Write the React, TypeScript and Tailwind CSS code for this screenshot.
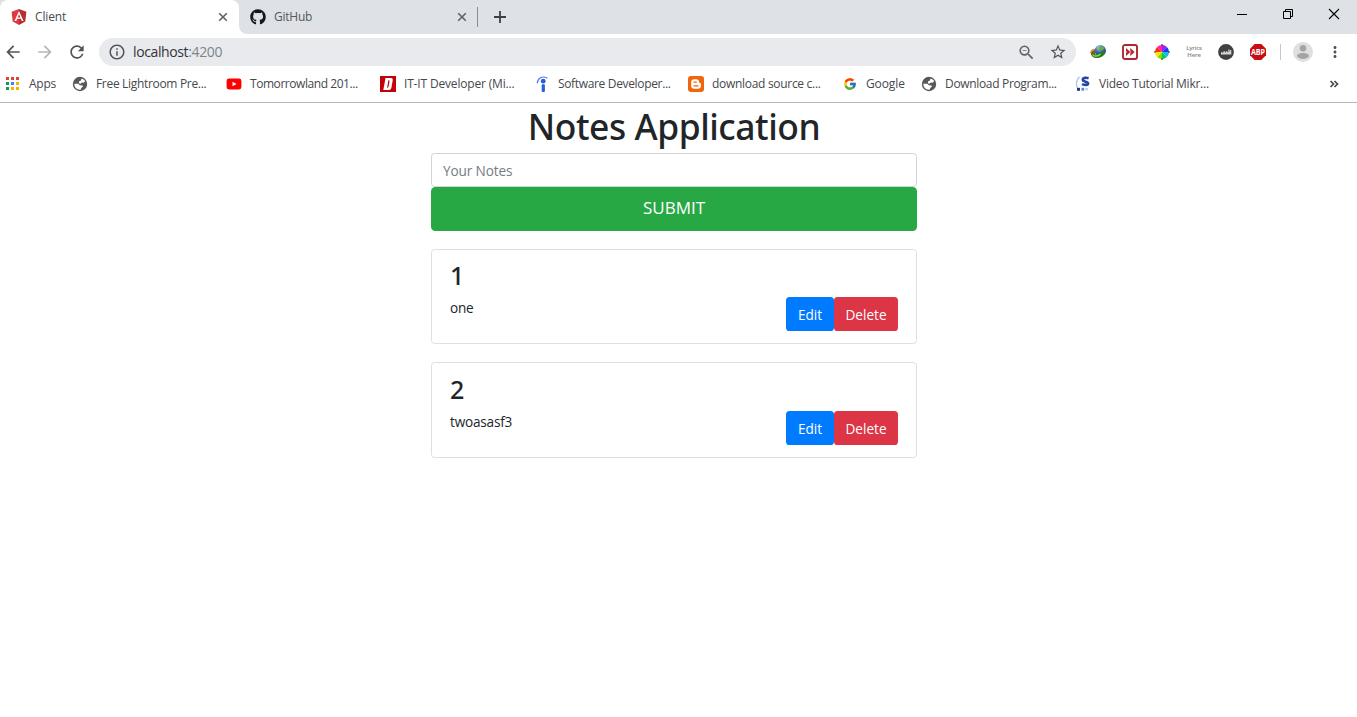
import type { ReactNode } from 'react';
import { FaGithub } from 'react-icons/fa';
import { FcGoogle } from 'react-icons/fc';
import {
  MdArrowBack,
  MdArrowForward,
  MdInfoOutline,
  MdMoreVert,
  MdRefresh,
  MdStarBorder,
  MdZoomOut,
} from 'react-icons/md';

function AngularIcon() {
  return (
    <svg viewBox="0 0 16 16" className="h-4 w-4 shrink-0">
      <path d="M8 0 .6 2.7l1.1 9.8L8 16z" fill="#dd3a44" />
      <path d="M8 0l7.4 2.7-1.1 9.8L8 16z" fill="#b52e31" />
      <path
        d="M8 2 3.5 12.1h1.7l.9-2.3h3.8l.9 2.3h1.7zm0 3.1 1.3 3.3H6.7z"
        fill="#fff"
        fillRule="evenodd"
      />
    </svg>
  );
}

function CloseIcon() {
  return (
    <svg viewBox="0 0 10 10" className="h-[10px] w-[10px] shrink-0">
      <path d="M1.2 1.2l7.6 7.6M8.8 1.2 1.2 8.8" stroke="#5f6368" strokeWidth="1.6" />
    </svg>
  );
}

function AppsIcon() {
  const colors = ['#db4437', '#db4437', '#db4437', '#0f9d58', '#4285f4', '#f4b400', '#0f9d58', '#f4b400', '#f4b400'];
  return (
    <svg viewBox="0 0 16 16" className="h-4 w-4">
      {colors.map((c, i) => (
        <rect key={i} x={1 + (i % 3) * 5} y={1 + Math.floor(i / 3) * 5} width="3" height="3" fill={c} />
      ))}
    </svg>
  );
}

function GlobeIcon() {
  return (
    <svg viewBox="0 0 16 16" className="h-4 w-4">
      <circle cx="8" cy="8" r="7.2" fill="#55585c" />
      <path d="M9.500 2.400c1.600.4 2.900 1.400 3.700 2.900l-1.700 1.500-1.800-.2-.9 1.200-2-.6.4-2 1.800-.6z" fill="#fff" />
      <path d="M2.300 7.800h3.900l1.700 1.500 2.700.2.300 1.200-1.500 1.100-.8 1.900C5.300 14.200 2.200 11.500 2.300 7.800z" fill="#fff" />
    </svg>
  );
}

function YoutubeIcon() {
  return (
    <svg viewBox="0 0 16 16" className="h-4 w-4">
      <rect x=".6" y="2.6" width="14.8" height="10.8" rx="2.4" fill="#f00" />
      <path d="M6.5 5.7v4.6L10.5 8z" fill="#fff" />
    </svg>
  );
}

function DetikIcon() {
  return (
    <svg viewBox="0 0 16 16" className="h-4 w-4">
      <rect width="16" height="16" fill="#c4000b" />
      <path
        d="M5.5 2h5.3c1.7 0 2.2.9 1.9 2.4l-1.3 7.3c-.3 1.5-1.3 2.3-2.8 2.3H3.3zm2.900 2.200-1.300 7.500c.8 0 1.200-.2 1.400-1l1-5.400c.1-.8-.2-1.100-1.100-1.100z"
        fill="#fff"
        fillRule="evenodd"
      />
    </svg>
  );
}

function IndeedIcon() {
  return (
    <svg viewBox="0 0 16 16" className="h-4 w-4">
      <circle cx="9.2" cy="5.2" r="2.4" fill="#2a5ee0" />
      <rect x="7.7" y="8.2" width="3.2" height="7.8" rx="1" fill="#2a5ee0" />
      <path d="M3.2 7.3C3.6 2.6 8-.9 13.3 2.2" stroke="#4a7ae6" strokeWidth="1.1" fill="none" />
    </svg>
  );
}

function BloggerIcon() {
  return (
    <svg viewBox="0 0 16 16" className="h-4 w-4">
      <rect width="16" height="16" rx="3" fill="#f0650e" />
      <path
        d="M6 3.200h2.300c1.700 0 2.800 1.200 2.800 2.700 0 .8.3 1 .9 1 .6 0 .9.3.9.9V10c0 1.600-1.200 2.800-2.800 2.800H6c-1.700 0-2.800-1.200-2.800-2.800V6C3.200 4.400 4.400 3.200 6 3.200z"
        fill="#fff"
      />
      <path d="M6 6.200h2.200M6 9.900h4" stroke="#f0650e" strokeWidth="1.3" strokeLinecap="round" />
    </svg>
  );
}

function TutorialIcon() {
  return (
    <svg viewBox="0 0 16 16" className="h-4 w-4">
      <path d="M4.600.8C1.500 3.600.8 8.100 2.500 12.500" stroke="#a9c6ec" strokeWidth="1.200" fill="none" />
      <path
        d="M13.600 2.200C11.500 1.500 7.800 1.500 7.800 3.800c0 2.300 5.300 1.500 5.300 3.600 0 2-4.200 1.700-6.100.8"
        stroke="#2444a8"
        strokeWidth="2.600"
        fill="none"
      />
      <rect x="2" y="11.800" width="3" height="3" fill="#17388f" />
      <rect x="6.400" y="11.800" width="2.800" height="2.800" fill="#5c84cf" />
      <rect x="10.500" y="12" width="2.300" height="2.300" fill="#b4cbee" />
    </svg>
  );
}

function DownloadManagerIcon() {
  return (
    <svg viewBox="0 0 16 16" className="h-4 w-4">
      <defs>
        <radialGradient id="earth" cx=".4" cy=".25" r=".8">
          <stop offset="0" stopColor="#b8d8f4" />
          <stop offset=".45" stopColor="#3a74b8" />
          <stop offset="1" stopColor="#173a6c" />
        </radialGradient>
      </defs>
      <path d="M0 9C.5 5.500 3 4.300 6.500 5L4 10z" fill="#d99b2c" />
      <path d="M1 9.500C2 6.800 4 6 6.500 6.500L5 10z" fill="#c43b22" />
      <circle cx="10.300" cy="6.600" r="5.600" fill="url(#earth)" />
      <path d="M8.500 3c2.500-1.500 5-.5 6 1.500l-2.500 1.800-3 .2z" fill="#6fae3c" />
      <path d="M.8 9c0 3.200 3.200 5.300 7 5 4-.4 7-2.700 8-6.500-2.300.2-3.800-.5-5.800 1.200C7.600 10.900 5.500 11.500 4 8.500z" fill="#267d1e" />
      <path d="M2.500 10.500c1.500 2.300 5 2.300 8-.5" stroke="#a5dc5c" strokeWidth="1.100" fill="none" />
    </svg>
  );
}

function FastForwardIcon() {
  return (
    <svg viewBox="0 0 16 16" className="h-4 w-4">
      <rect x="1" y="1" width="14" height="14" rx="2" fill="#fff" stroke="#b3262e" strokeWidth="1.900" />
      <path d="M4 4 8.300 8 4 12zM8.300 4l4.300 4-4.300 4z" fill="#b3262e" />
      <path d="M4.200 7.300 5.200 8l-1 .7zM8.500 7.300l1 .7-1 .7z" fill="#fff" />
    </svg>
  );
}

function ColorWheelIcon() {
  const colors = ['#a020f0', '#2038f0', '#18b8f0', '#10c850', '#80e000', '#f4e800', '#ff3010', '#ff20b0'];
  return (
    <svg viewBox="-8 -8 16 16" className="h-4 w-4">
      {colors.map((c, i) => (
        <path key={c} d="M0 0V-7A7 7 0 0 1 4.950-4.950z" fill={c} transform={`rotate(${i * 45})`} />
      ))}
      <path d="M0-8v1.800M0 6.200V8M-8 0h1.800M6.200 0H8" stroke="#333" strokeWidth="1.200" />
    </svg>
  );
}

function LyricsIcon() {
  return (
    <span className="block w-4 text-center font-['Open_Sans',sans-serif] text-[6px] leading-[7px] font-semibold tracking-[-0.15px] whitespace-nowrap text-[#858585]">
      Lyrics
      <br />
      Here
    </span>
  );
}

function ChartExtensionIcon() {
  return (
    <svg viewBox="0 0 16 16" className="h-4 w-4">
      <circle cx="8" cy="8" r="7.900" fill="#414141" />
      <path d="M3 10.500V8.200h1.600v.6h.8V7.300H7v1.200h.9V7.200h1.400v1h1V5.500h1.200v2.300h.6V6h1.200v4.500z" fill="#d8d8d8" />
    </svg>
  );
}

function AdblockIcon() {
  return (
    <svg viewBox="0 0 16 16" className="h-4 w-4">
      <path d="M4.700 0h6.600L16 4.700v6.600L11.300 16H4.700L0 11.300V4.700z" fill="#c70d12" />
      <text x="8" y="11" textAnchor="middle" fontFamily="Open Sans" fontWeight="700" fontSize="8.200" textLength="14.200" lengthAdjust="spacingAndGlyphs" fill="#fff">
        ABP
      </text>
    </svg>
  );
}

function ProfileIcon() {
  return (
    <svg viewBox="0 0 20 20" className="h-5 w-5">
      <circle cx="10" cy="10" r="10" fill="#dfdfdf" />
      <circle cx="10" cy="6.300" r="3.200" fill="#a4a4a4" />
      <path d="M4 14.200c0-2.200 3-3.200 6-3.200s6 1 6 3.200C14.500 16 12.500 17 10 17s-4.500-1-6-2.800z" fill="#a4a4a4" />
    </svg>
  );
}

function TabStrip() {
  return (
    <div className="flex h-[34px] bg-[#dee1e6]">
      <div className="flex w-[239px] items-center rounded-t-lg bg-white px-[11px]">
        <AngularIcon />
        <span className="ml-2 flex-1 tracking-[-0.15px] text-[#45494d]">Client</span>
        <CloseIcon />
      </div>
      <div className="flex flex-1 bg-white">
        <div className="flex flex-1 items-center rounded-bl-lg bg-[#dee1e6] pl-[11px]">
          <FaGithub className="h-4 w-4 text-[#15191e]" />
          <span className="ml-2 w-[183px] tracking-[-0.25px] text-[#54585d]">GitHub</span>
          <CloseIcon />
          <div className="ml-[10px] h-5 w-px bg-[#8a8d92]" />
          <svg viewBox="0 0 12 12" className="ml-4 h-3 w-3">
            <path d="M6 0v12M0 6h12" stroke="#3c4043" strokeWidth="1.800" />
          </svg>
          <div className="ml-auto flex h-full items-start">
            <svg viewBox="0 0 12 12" className="mt-2 h-3 w-3" shapeRendering="crispEdges">
              <path d="M1 6.500h10" stroke="#000" />
            </svg>
            <svg viewBox="0 0 12 12" className="mt-2 ml-[34px] h-3 w-3" fill="none" stroke="#000">
              <path d="M1.500 3.500h7v7h-7zM3.500 3.500v-2h7v7h-2" />
            </svg>
            <svg viewBox="0 0 12 12" className="mt-2 mr-[17px] ml-[34px] h-3 w-3">
              <path d="M1 1l10 10M11 1 1 11" stroke="#000" strokeWidth="1.100" />
            </svg>
          </div>
        </div>
      </div>
    </div>
  );
}

function AddressBar() {
  return (
    <div className="flex h-9 items-center text-[#505458]">
      <MdArrowBack className="ml-[3px] h-5 w-5" />
      <MdArrowForward className="ml-3 h-5 w-5 text-[#b5b7b9]" />
      <MdRefresh className="ml-3 h-5 w-5" />
      <div className="ml-3 flex h-7 w-[977px] items-center rounded-full bg-[#e8eaed]">
        <MdInfoOutline className="ml-[9px] h-[18px] w-[18px]" />
        <span className="ml-[7px] flex-1 text-sm tracking-[-0.38px] text-[#808489]">
          <span className="text-[#303337]">localhost</span>:4200
        </span>
        <MdZoomOut className="h-[19px] w-[19px] text-[#606468]" />
        <MdStarBorder className="mr-[9px] ml-[13px] h-[18px] w-[18px]" />
      </div>
      <div className="ml-[14px] flex items-center gap-4">
        <DownloadManagerIcon />
        <FastForwardIcon />
        <ColorWheelIcon />
        <LyricsIcon />
        <ChartExtensionIcon />
        <AdblockIcon />
      </div>
      <div className="ml-[14px] h-4 w-px bg-[#c4c6c9]" />
      <div className="ml-3">
        <ProfileIcon />
      </div>
      <MdMoreVert className="ml-[13px] h-[18px] w-[18px]" />
    </div>
  );
}

interface Bookmark {
  label: string;
  icon: ReactNode;
  className: string;
}

const bookmarks: Bookmark[] = [
  { label: 'Apps', icon: <AppsIcon />, className: 'w-[67px] tracking-[-0.25px]' },
  { label: 'Free Lightroom Pre...', icon: <GlobeIcon />, className: 'w-[154px] tracking-[-0.32px]' },
  { label: 'Tomorrowland 201...', icon: <YoutubeIcon />, className: 'w-[154px] tracking-[-0.44px]' },
  { label: 'IT-IT Developer (Mi...', icon: <DetikIcon />, className: 'w-[154px] tracking-[-0.17px]' },
  { label: 'Software Developer...', icon: <IndeedIcon />, className: 'w-[154px] tracking-[-0.34px]' },
  { label: 'download source c...', icon: <BloggerIcon />, className: 'w-[154px] tracking-[-0.3px]' },
  { label: 'Google', icon: <FcGoogle className="h-4 w-4 p-px" />, className: 'w-[79px] tracking-[-0.1px]' },
  { label: 'Download Program...', icon: <GlobeIcon />, className: 'w-[154px] tracking-[-0.33px]' },
  { label: 'Video Tutorial Mikr...', icon: <TutorialIcon />, className: 'w-[154px] tracking-[-0.25px]' },
];

function BookmarksBar() {
  return (
    <div className="flex h-[33px] items-center border-b border-[#b6b6b6] pr-[17px] pb-[5px] pl-[5px] text-[#45494d]">
      {bookmarks.map((b) => (
        <div key={b.label} className={`flex shrink-0 items-center gap-2 whitespace-nowrap ${b.className}`}>
          {b.icon}
          <span className="leading-4">{b.label}</span>
        </div>
      ))}
      <svg viewBox="0 0 10 8" className="mr-px ml-auto h-2 w-[10px]" fill="none" stroke="#45494d" strokeWidth="1.700">
        <path d="M1.500 1l3 3-3 3M5.500 1l3 3-3 3" />
      </svg>
    </div>
  );
}

const notes = [
  { id: 1, text: 'one' },
  { id: 2, text: 'twoasasf3' },
];

function NoteCard({ id, text }: { id: number; text: string }) {
  return (
    <div className="mt-[18px] h-[95.4px] rounded-[3.6px] border border-[#dfdfdf] px-[18px] pt-[10.2px]">
      <h3 className="font-['Noto_Sans',sans-serif] text-[25px] leading-[30px] font-medium tracking-[-0.8px]">{id}</h3>
      <div className="mt-[7px] flex justify-between">
        <p className="leading-[22px] tracking-[-0.2px]">{text}</p>
        <div className="flex text-white">
          <button className="h-[34px] w-12 rounded-[3.6px] bg-[#007bff] pt-[2px]">Edit</button>
          <button className="h-[34px] w-16 rounded-[3.6px] bg-[#dc3545] pt-[2px]">Delete</button>
        </div>
      </div>
    </div>
  );
}

export default function App() {
  return (
    <div className="flex h-[717px] w-[1357px] flex-col overflow-hidden bg-white font-['Open_Sans','Noto_Sans',sans-serif] text-xs">
      <header>
        <TabStrip />
        <AddressBar />
        <BookmarksBar />
      </header>
      <main className="ml-[431px] w-[486px] text-[13.6px] text-[#212529]">
        <h1 className="mb-[5px] pt-[2px] text-center font-['Noto_Sans',sans-serif] text-[35.4px] leading-[43px] font-medium tracking-[-0.46px]">
          Notes Application
        </h1>
        <input
          placeholder="Your Notes"
          className="block h-[34px] w-full rounded-[3.6px] border border-[#ced4da] px-[11px] pt-px tracking-[-0.12px] placeholder:text-[#747c84]"
        />
        <button className="block h-11 w-full rounded-[4.3px] bg-[#28a745] pb-px text-[17px] text-white">SUBMIT</button>
        {notes.map((note) => (
          <NoteCard key={note.id} {...note} />
        ))}
      </main>
    </div>
  );
}
